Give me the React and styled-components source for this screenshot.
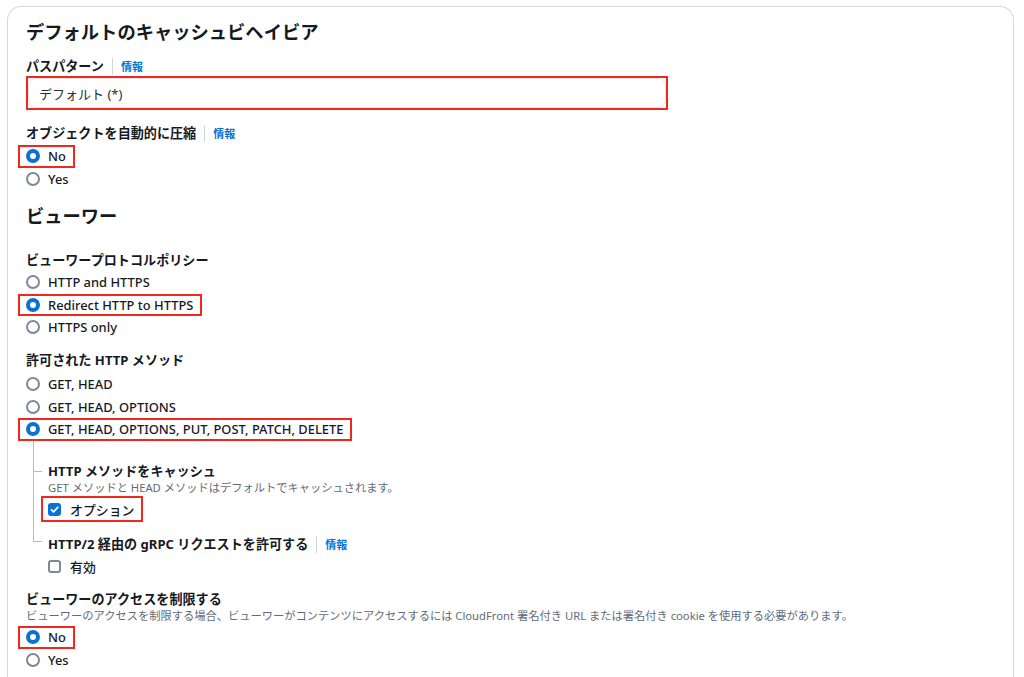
import React from "react";
import styled, { createGlobalStyle, css } from "styled-components";

const Global = createGlobalStyle`
  html, body { margin: 0; padding: 0; background: #ffffff; }
  body {
    font-family: "Noto Sans", "Noto Sans CJK JP", sans-serif;
    color: #16191f;
    -webkit-font-smoothing: antialiased;
  }
`;

const RED = "#f0291c";
const BLUE = "#0972d3";
const LINE = "#b4bbc4";

const Page = styled.div`
  padding: 6px 10px 0 7px;
`;

const Card = styled.section`
  border: 1px solid #d5d9de;
  border-bottom: none;
  border-radius: 14px 14px 0 0;
  padding: 13px 18px 0 18px;
  height: 671px;
  box-sizing: border-box;
  overflow: hidden;
`;

const Heading = styled.h2`
  margin: ${(p) => p.$mt || 0}px 0 0;
  font-size: 18.3px;
  line-height: 24px;
  font-weight: 700;
  color: #16191f;
`;

const LabelRow = styled.div`
  display: flex;
  align-items: center;
  height: 18px;
  margin-top: ${(p) => p.$mt || 0}px;
`;

const Label = styled.span`
  font-size: 13.1px;
  line-height: 18px;
  font-weight: 700;
  color: #16191f;
  white-space: nowrap;
`;

const Sep = styled.span`
  width: 1px;
  height: 17px;
  background: #d1d5db;
  margin: 0 8px;
`;

const Info = styled.a`
  font-size: 11px;
  font-weight: 700;
  color: ${BLUE};
  text-decoration: none;
`;

const Desc = styled.div`
  font-size: 11.25px;
  line-height: 16px;
  color: #5f6b7a;
  white-space: nowrap;
`;

const InputFrame = styled.div`
  margin-top: ${(p) => p.$mt || 0}px;
  width: 642px;
  border: 2px solid ${RED};
  box-sizing: border-box;
`;

const TextInput = styled.div`
  height: 30px;
  border: 1px solid #e3e6ea;
  border-radius: 8px;
  box-sizing: border-box;
  display: flex;
  align-items: center;
  padding-left: 10px;
  font-size: 13px;
  color: #2a2e33;
`;

const Group = styled.div`
  display: flex;
  flex-direction: column;
  margin-top: ${(p) => p.$mt || 0}px;
`;

const Option = styled.label`
  display: flex;
  align-items: center;
  gap: 8px;
  height: 22.5px;
  width: fit-content;
  box-sizing: border-box;
  font-size: 12.9px;
  font-weight: 500;
  color: #16191f;
  white-space: nowrap;
  ${(p) =>
    p.$hl &&
    css`
      border: 2px solid ${RED};
      margin-left: -8px;
      padding: 0 7px 0 6px;
    `}
`;

const RadioDot = styled.span`
  width: 14px;
  height: 14px;
  border-radius: 50%;
  box-sizing: border-box;
  flex-shrink: 0;
  background: #fff;
  border: ${(p) => (p.$on ? `4px solid ${BLUE}` : "2px solid #7d8998")};
`;

const CheckOption = styled.label`
  display: flex;
  align-items: center;
  gap: 9px;
  width: fit-content;
  height: ${(p) => (p.$hl ? 26 : 20)}px;
  margin-top: ${(p) => p.$mt || 0}px;
  box-sizing: border-box;
  font-size: 12.9px;
  font-weight: 500;
  color: #16191f;
  ${(p) =>
    p.$hl &&
    css`
      border: 2px solid ${RED};
      margin-left: -7px;
      padding: 0 7px 0 5px;
    `}
`;

const Box = styled.span`
  width: 13px;
  height: 13px;
  border-radius: 3px;
  box-sizing: border-box;
  flex-shrink: 0;
  display: flex;
  align-items: center;
  justify-content: center;
  ${(p) =>
    p.$on
      ? css`
          background: ${BLUE};
        `
      : css`
          border: 2px solid #7d8998;
          background: #fff;
        `}
`;

const Tree = styled.div`
  display: flex;
  flex-direction: column;
`;

const TreeItem = styled.div`
  display: flex;
`;

const Connector = styled.div`
  width: 15px;
  margin-left: 7px;
  flex-shrink: 0;
  box-sizing: border-box;
  border-left: ${(p) => (p.$last ? "none" : `1px solid ${LINE}`)};
`;

const Stub = styled.div`
  width: 8px;
  height: ${(p) => p.$h}px;
  box-sizing: border-box;
  border-bottom: 1px solid ${LINE};
  ${(p) =>
    p.$last &&
    css`
      border-left: 1px solid ${LINE};
      width: 9px;
    `}
`;

const ItemBody = styled.div`
  display: flex;
  flex-direction: column;
  padding-top: ${(p) => p.$pt}px;
`;

function Radio({ on, hl, children }) {
  return (
    <Option $hl={hl}>
      <RadioDot $on={on} />
      {children}
    </Option>
  );
}

function Checkbox({ on, hl, mt, children }) {
  return (
    <CheckOption $hl={hl} $mt={mt}>
      <Box $on={on}>
        {on && (
          <svg width="9" height="9" viewBox="0 0 10 10">
            <path
              d="M1.6 5.3 L4 7.6 L8.6 2.6"
              stroke="#fff"
              strokeWidth="1.9"
              fill="none"
              strokeLinecap="round"
              strokeLinejoin="round"
            />
          </svg>
        )}
      </Box>
      {children}
    </CheckOption>
  );
}

function FieldLabel({ mt, info, children }) {
  return (
    <LabelRow $mt={mt}>
      <Label>{children}</Label>
      {info && (
        <>
          <Sep />
          <Info href="#">情報</Info>
        </>
      )}
    </LabelRow>
  );
}

export default function App() {
  return (
    <>
      <Global />
      <Page>
        <Card>
          <Heading>デフォルトのキャッシュビヘイビア</Heading>

          <FieldLabel mt={13} info>
            パスパターン
          </FieldLabel>
          <InputFrame $mt={1}>
            <TextInput>デフォルト (*)</TextInput>
          </InputFrame>

          <FieldLabel mt={14} info>
            オブジェクトを自動的に圧縮
          </FieldLabel>
          <Group $mt={3}>
            <Radio on hl>
              No
            </Radio>
            <Radio>Yes</Radio>
          </Group>

          <Heading $mt={14}>ビューワー</Heading>

          <FieldLabel mt={23}>ビューワープロトコルポリシー</FieldLabel>
          <Group $mt={2}>
            <Radio>HTTP and HTTPS</Radio>
            <Radio on hl>
              Redirect HTTP to HTTPS
            </Radio>
            <Radio>HTTPS only</Radio>
          </Group>

          <FieldLabel mt={12.5}>許可された HTTP メソッド</FieldLabel>
          <Group $mt={4}>
            <Radio>GET, HEAD</Radio>
            <Radio>GET, HEAD, OPTIONS</Radio>
            <Radio on hl>
              GET, HEAD, OPTIONS, PUT, POST, PATCH, DELETE
            </Radio>
          </Group>

          <Tree>
            <TreeItem>
              <Connector>
                <Stub $h={31} />
              </Connector>
              <ItemBody $pt={21.5}>
                <FieldLabel>HTTP メソッドをキャッシュ</FieldLabel>
                <Desc>GET メソッドと HEAD メソッドはデフォルトでキャッシュされます。</Desc>
                <Checkbox on hl>
                  オプション
                </Checkbox>
              </ItemBody>
            </TreeItem>
            <TreeItem>
              <Connector $last>
                <Stub $last $h={20} />
              </Connector>
              <ItemBody $pt={13}>
                <FieldLabel info>HTTP/2 経由の gRPC リクエストを許可する</FieldLabel>
                <Checkbox mt={3}>有効</Checkbox>
              </ItemBody>
            </TreeItem>
          </Tree>

          <FieldLabel mt={14}>ビューワーのアクセスを制限する</FieldLabel>
          <Desc>
            ビューワーのアクセスを制限する場合、ビューワーがコンテンツにアクセスするには CloudFront 署名付き URL または署名付き cookie を使用する必要があります。
          </Desc>
          <Group $mt={2}>
            <Radio on hl>
              No
            </Radio>
            <Radio>Yes</Radio>
          </Group>
        </Card>
      </Page>
    </>
  );
}
